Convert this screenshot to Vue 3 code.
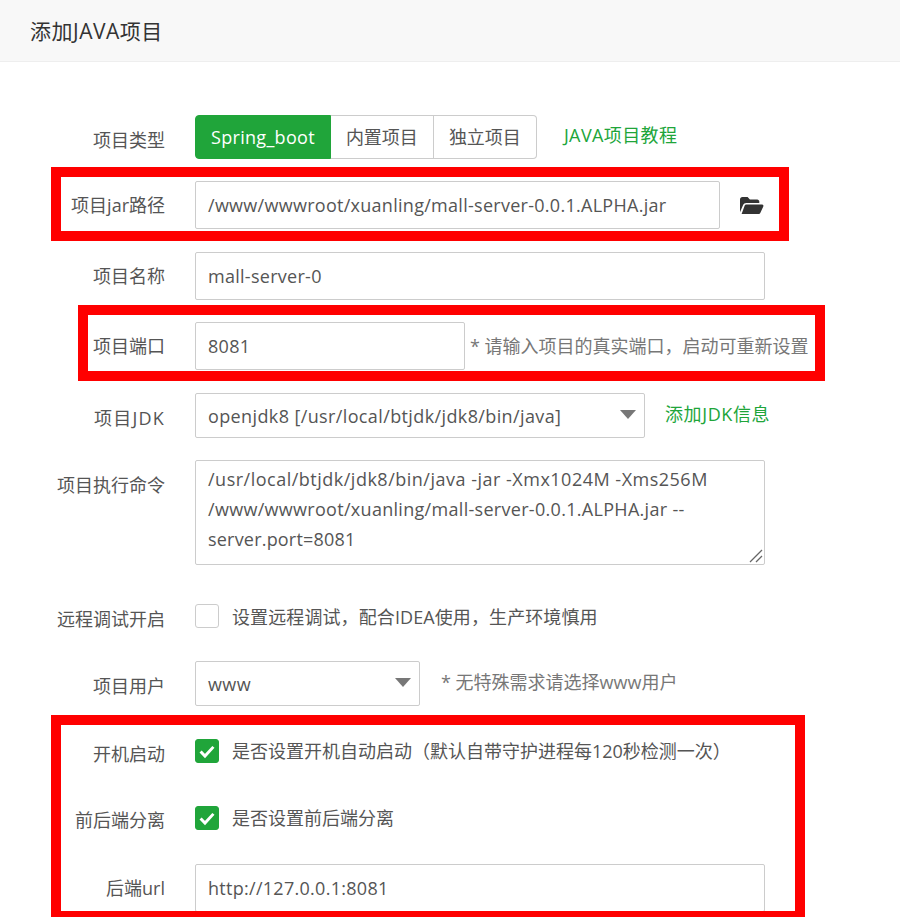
<script setup>
const folderPath = 'M1 6.5C1 5.1 2 4 3.4 4h5.2l2.3 2.4h7.3c1.2 0 2.1 1 2.1 2.1V10H7.2c-1.4 0-2.6.8-3.1 2.1L1 19.2V6.5zM7.2 11.5h15.9c1 0 1.6 1 1.2 1.9l-2.9 6.3c-.3.8-1.1 1.3-2 1.3H2.6l3.1-8.6c.2-.6.8-.9 1.5-.9z'
</script>

<template>
  <div class="page">
    <header class="head">添加JAVA项目</header>
    <form class="form" @submit.prevent>
      <div class="row r-type">
        <label class="lab low3">项目类型</label>
        <div class="btns">
          <span class="btn on">Spring_boot</span>
          <span class="btn">内置项目</span>
          <span class="btn">独立项目</span>
        </div>
        <a class="link l-type">JAVA项目教程</a>
      </div>
      <div class="row r-jar">
        <label class="lab">项目jar路径</label>
        <div class="inp w525">/www/wwwroot/xuanling/mall-server-0.0.1.ALPHA.jar</div>
        <svg class="folder" viewBox="0 0 25 22" aria-hidden="true"><path :d="folderPath" /></svg>
      </div>
      <div class="row r-name">
        <label class="lab">项目名称</label>
        <div class="inp w570">mall-server-0</div>
      </div>
      <div class="row r-port">
        <label class="lab">项目端口</label>
        <div class="inp w270">8081</div>
        <span class="hint h-port">* 请输入项目的真实端口，启动可重新设置</span>
      </div>
      <div class="row r-jdk">
        <label class="lab low2 lab-jdk">项目JDK</label>
        <div class="sel w450">openjdk8 [/usr/local/btjdk/jdk8/bin/java]<i class="caret"></i></div>
        <a class="link l-jdk">添加JDK信息</a>
      </div>
      <div class="row r-cmd">
        <label class="lab lab-top">项目执行命令</label>
        <div class="area">
          <span class="ln ln1">/usr/local/btjdk/jdk8/bin/java -jar -Xmx1024M -Xms256M</span>
          <span class="ln ln2">/www/wwwroot/xuanling/mall-server-0.0.1.ALPHA.jar --</span>
          <span class="ln ln3">server.port=8081</span>
          <svg class="grip" viewBox="0 0 14 14" aria-hidden="true"><path d="M1 13 13 1M7 13l6-6" /></svg>
        </div>
      </div>
      <div class="row r-debug">
        <label class="lab low3">远程调试开启</label>
        <i class="box"></i>
        <span class="txt t-debug">设置远程调试，配合IDEA使用，生产环境慎用</span>
      </div>
      <div class="row r-user">
        <label class="lab low2">项目用户</label>
        <div class="sel w225">www<i class="caret"></i></div>
        <span class="hint h-user">* 无特殊需求请选择www用户</span>
      </div>
      <div class="row r-boot">
        <label class="lab low3">开机启动</label>
        <i class="box checked"><svg viewBox="0 0 24 24" aria-hidden="true"><path d="M5 12.5 9.8 17.5 19 7.5" /></svg></i>
        <span class="txt">是否设置开机自动启动（默认自带守护进程每120秒检测一次）</span>
      </div>
      <div class="row r-sep">
        <label class="lab low2">前后端分离</label>
        <i class="box checked"><svg viewBox="0 0 24 24" aria-hidden="true"><path d="M5 12.5 9.8 17.5 19 7.5" /></svg></i>
        <span class="txt">是否设置前后端分离</span>
      </div>
      <div class="row r-url">
        <label class="lab">后端url</label>
        <div class="inp w570">http://127.0.0.1:8081</div>
      </div>
    </form>
    <div class="mark m1"></div>
    <div class="mark m2"></div>
    <div class="mark m3"></div>
  </div>
</template>

<style scoped>
.page {
  position: relative;
  width: 900px;
  height: 917px;
  overflow: hidden;
  background: #fff;
  color: #555;
  font-family: "Open Sans", "Noto Sans CJK SC", sans-serif;
  font-size: 18px;
}
.head {
  height: 61px;
  padding-left: 30px;
  line-height: 62px;
  font-size: 21px;
  letter-spacing: .5px;
  background: #f8f8f8;
  border-bottom: 1px solid #eee;
  color: #333;
}
.form {
  display: flex;
  flex-direction: column;
  padding-top: 53px;
}
.row { display: flex; align-items: center; }
.lab {
  width: 165px;
  margin-right: 30px;
  text-align: right;
  flex: none;
  color: #555;
  line-height: 24px;
}
.low2 { margin-top: 4px; }
.low3 { margin-top: 6px; }
.lab-jdk { letter-spacing: 1.2px; }
.lab-top { align-self: flex-start; padding-top: 13px; }
.r-type { height: 44px; }
.r-jar { height: 48px; margin-top: 22px; }
.r-name { height: 48px; margin-top: 23px; }
.r-port { height: 48px; margin-top: 22px; }
.r-jdk { height: 45px; margin-top: 23px; }
.r-cmd { height: 105px; margin-top: 22px; }
.r-debug { height: 24px; margin-top: 39px; }
.r-user { height: 45px; margin-top: 33px; }
.r-boot { height: 24px; margin-top: 33px; }
.r-sep { height: 24px; margin-top: 43px; }
.r-url { height: 48px; margin-top: 34px; }
.btns { display: flex; height: 44px; }
.btn {
  display: flex;
  align-items: center;
  padding: 0 15px;
  border: 1px solid #ccc;
  border-left: 0;
  line-height: 1;
}
.btn:last-child { border-radius: 0 4px 4px 0; }
.btn.on {
  background: #20a53a;
  border: 1px solid #20a53a;
  color: #fff;
  border-radius: 4px 0 0 4px;
  letter-spacing: .3px;
}
.inp, .sel, .area {
  box-sizing: border-box;
  border: 1px solid #ccc;
  border-radius: 2px;
  padding: 0 12px;
  color: #555;
  flex: none;
}
.inp, .sel { display: flex; align-items: center; height: 100%; position: relative; }
.inp { letter-spacing: .28px; }
.sel { letter-spacing: .38px; }
.w525 { width: 525px; }
.w570 { width: 570px; }
.w270 { width: 270px; }
.w450 { width: 450px; }
.w225 { width: 225px; }
.area {
  position: relative;
  width: 570px;
  height: 105px;
  padding-top: 3px;
  line-height: 30px;
}
.ln { display: block; white-space: nowrap; }
.ln1 { letter-spacing: .5px; }
.ln2 { letter-spacing: .3px; }
.ln3 { letter-spacing: .2px; }
.grip {
  position: absolute;
  right: 1px;
  bottom: 1px;
  width: 14px;
  height: 14px;
  fill: none;
  stroke: #666;
  stroke-width: 1.3;
}
.caret {
  position: absolute;
  right: 8px;
  top: 50%;
  margin-top: -6px;
  border-style: solid;
  border-width: 9px 8px 0;
  border-color: #777 transparent transparent;
}
.folder { width: 25px; height: 22px; margin-left: 19px; margin-top: -2px; fill: #333; }
.link { color: #20a53a; line-height: 24px; }
.l-type { margin-left: 27px; margin-top: -4px; letter-spacing: .4px; }
.l-jdk { margin-left: 20px; margin-top: -4px; letter-spacing: .6px; }
.hint { color: #777; line-height: 24px; }
.h-port { margin-left: 5px; white-space: nowrap; }
.h-user { margin-left: 21px; margin-top: -4px; }
.box {
  box-sizing: border-box;
  width: 24px;
  height: 24px;
  border: 1px solid #ccc;
  border-radius: 3px;
  flex: none;
  display: flex;
}
.box.checked { background: #20a53a; border-color: #20a53a; }
.box svg { width: 22px; height: 22px; fill: none; stroke: #fff; stroke-width: 3.2; }
.txt { margin-left: 13px; color: #555; line-height: 24px; white-space: nowrap; }
.t-debug { letter-spacing: .1px; margin-top: 2px; }
.mark {
  position: absolute;
  border: 10px solid #f00;
  box-sizing: border-box;
  pointer-events: none;
}
.m1 { left: 51px; top: 167px; width: 738px; height: 74px; }
.m2 { left: 78px; top: 305px; width: 747px; height: 76px; }
.m3 { left: 51px; top: 715px; width: 754px; height: 206px; }
</style>
